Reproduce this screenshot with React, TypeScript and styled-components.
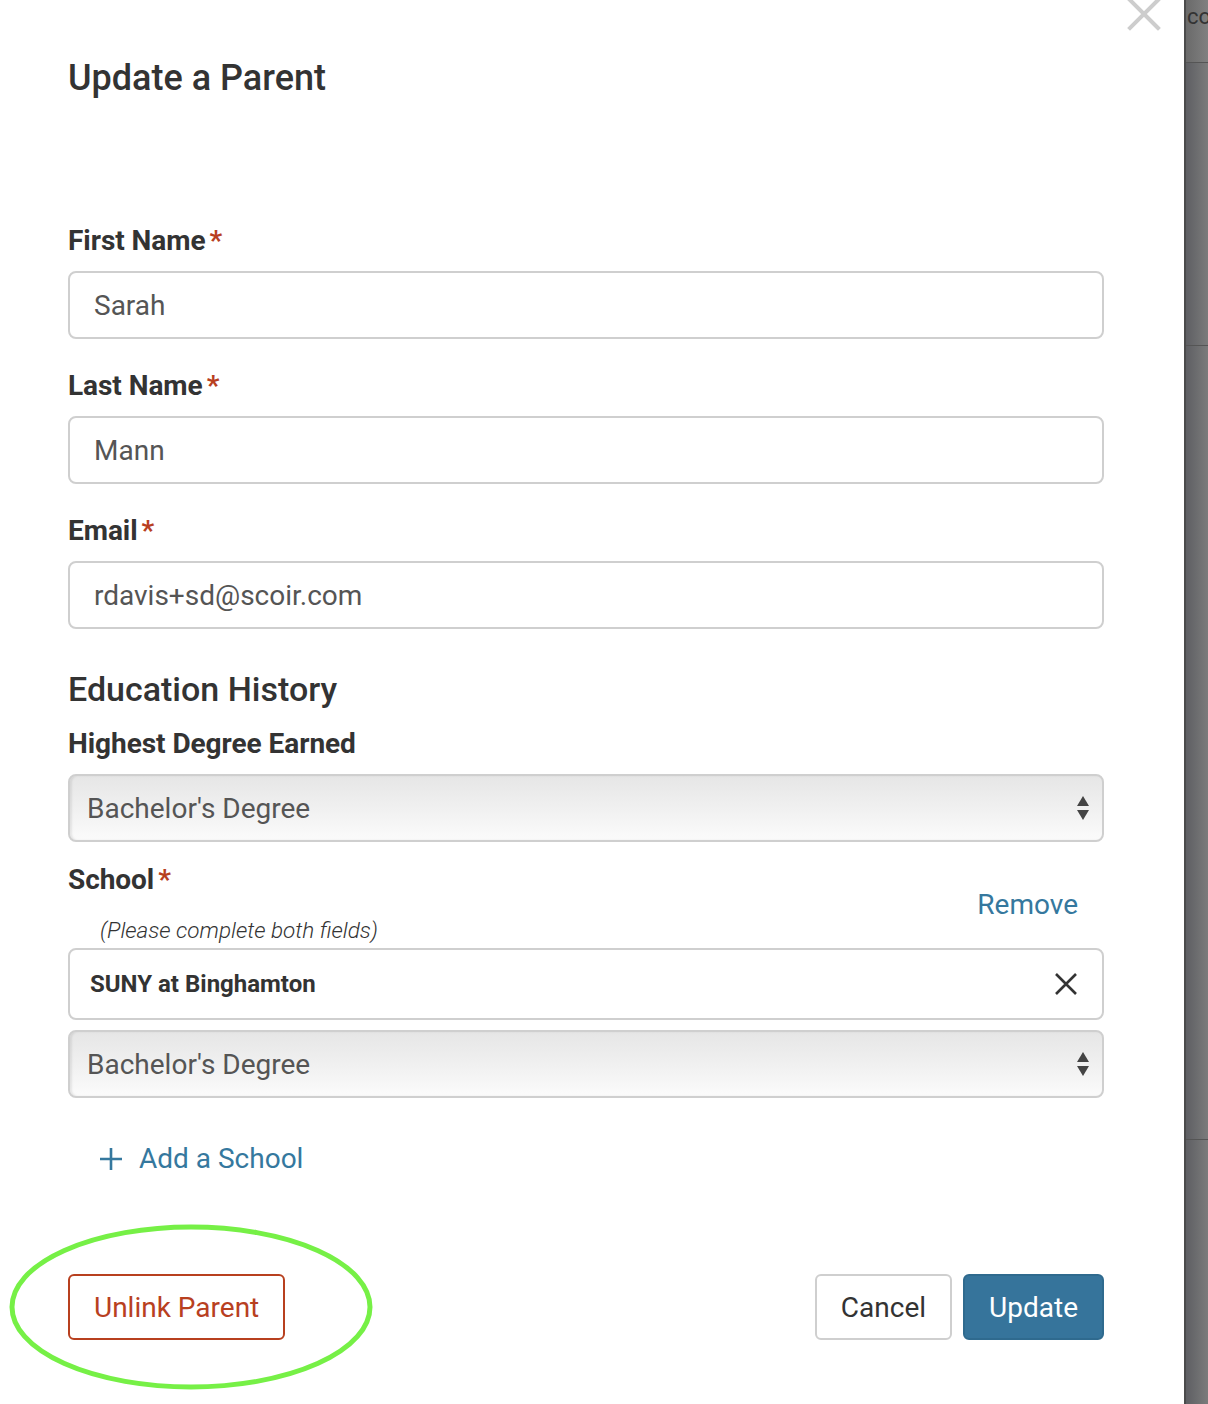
import React, { FC } from 'react';
import styled, { createGlobalStyle } from 'styled-components';

const GlobalStyle = createGlobalStyle`
  html, body {
    margin: 0;
    padding: 0;
    background: #fff;
  }
  body {
    font-family: Roboto, "Liberation Sans", Arial, sans-serif;
    color: #333;
  }
`;

const Page = styled.div`
  display: flex;
  width: 1208px;
  height: 1404px;
  overflow: hidden;
`;

const Modal = styled.div`
  position: relative;
  width: 1184px;
  flex: none;
  background: #fff;
  padding: 56px 80px 0 68px;
  box-sizing: border-box;
`;

const Backdrop = styled.div`
  flex: 1;
  display: flex;
  flex-direction: column;
  border-left: 2px solid #4b4b4b;
  background: linear-gradient(90deg, #5e5f63 0%, #7b7b7b 100%);
  overflow: hidden;
`;

const BackdropBand = styled.div<{ $h: number; $top?: boolean }>`
  height: ${(p) => p.$h}px;
  flex: none;
  border-bottom: 1px solid #555;
  background: ${(p) =>
    p.$top ? 'linear-gradient(90deg, #6a6a6a 0%, #808080 100%)' : 'transparent'};
  font-size: 22px;
  color: #333;
  white-space: nowrap;
  padding: 4px 0 0 1px;
  box-sizing: border-box;
`;

const CloseButton = styled.button`
  position: absolute;
  top: -6px;
  right: 20px;
  width: 40px;
  height: 40px;
  padding: 0;
  border: none;
  background: none;
  cursor: pointer;
`;

const Title = styled.h2`
  margin: 0 0 126px;
  font-size: 36px;
  line-height: 44px;
  font-weight: 500;
  color: #333;
`;

const Label = styled.div<{ $mt?: number }>`
  font-size: 28px;
  line-height: 30px;
  font-weight: 700;
  color: #333;
  letter-spacing: -0.05px;
  margin-top: ${(p) => p.$mt ?? 0}px;
`;

const Req = styled.span`
  color: #b8401f;
  margin-left: 4px;
`;

const Input = styled.div<{ $h?: number; $bold?: boolean }>`
  display: flex;
  align-items: center;
  justify-content: space-between;
  height: ${(p) => p.$h ?? 68}px;
  border: 2px solid #cfcfcf;
  border-radius: 8px;
  box-sizing: border-box;
  padding: 0 24px 0 ${(p) => (p.$bold ? 20 : 24)}px;
  font-size: ${(p) => (p.$bold ? 24 : 28)}px;
  font-weight: ${(p) => (p.$bold ? 700 : 400)};
  color: ${(p) => (p.$bold ? '#333' : '#555')};
  margin-top: 15px;
`;

const Select = styled.div<{ $mt?: number }>`
  display: flex;
  align-items: center;
  justify-content: space-between;
  height: 68px;
  border: 2px solid #cfcfcf;
  border-radius: 8px;
  box-sizing: border-box;
  padding: 0 12px 0 17px;
  font-size: 28px;
  color: #555;
  background: linear-gradient(180deg, #e6e6e6 0%, #f0f0f0 50%, #fbfbfb 100%);
  box-shadow: inset 2px 0 2px rgba(0, 0, 0, 0.08);
  margin-top: ${(p) => p.$mt ?? 15}px;
`;

const SectionTitle = styled.h3`
  margin: 40px 0 0;
  font-size: 34px;
  line-height: 40px;
  font-weight: 500;
  color: #333;
`;

const SchoolHead = styled.div`
  display: flex;
  justify-content: space-between;
  align-items: flex-end;
  margin-top: 23px;
`;

const Hint = styled.div`
  font-size: 22.5px;
  line-height: 26px;
  font-style: italic;
  font-weight: 300;
  color: #333;
  margin: 22px 0 0 32px;
`;

const LinkButton = styled.button<{ $size?: number }>`
  border: none;
  background: none;
  padding: 0;
  font-family: inherit;
  font-size: ${(p) => p.$size ?? 28}px;
  color: #35789e;
  cursor: pointer;
  display: flex;
  align-items: center;
  gap: 16px;
`;

const RemoveLink = styled(LinkButton)`
  margin: 0 26px 22px 0;
`;

const AddRow = styled.div`
  margin: 44px 0 0 31px;
`;

const Footer = styled.div`
  display: flex;
  align-items: center;
  justify-content: space-between;
  margin-top: 99px;
`;

const ButtonGroup = styled.div`
  display: flex;
  gap: 11px;
`;

const Button = styled.button<{ $variant: 'danger' | 'default' | 'primary' }>`
  height: 66px;
  border-radius: 6px;
  font-family: inherit;
  font-size: 28px;
  padding: 0 24px;
  box-sizing: border-box;
  cursor: pointer;
  border: 2px solid
    ${(p) => (p.$variant === 'danger' ? '#b8401f' : p.$variant === 'primary' ? '#2f6a8e' : '#cfcfcf')};
  background: ${(p) => (p.$variant === 'primary' ? '#36749b' : '#fff')};
  color: ${(p) => (p.$variant === 'danger' ? '#b8401f' : p.$variant === 'primary' ? '#fff' : '#333')};
`;

const UnlinkWrap = styled.div`
  position: relative;
`;

const Highlight = styled.svg`
  position: absolute;
  left: -60px;
  top: -52px;
  pointer-events: none;
`;

const SelectArrows: FC = () => (
  <svg width="14" height="26" viewBox="0 0 14 26">
    <path d="M7 1 L13 11 H1 Z" fill="#444" />
    <path d="M7 25 L13 15 H1 Z" fill="#444" />
  </svg>
);

const App: FC = () => (
  <>
    <GlobalStyle />
    <Page>
      <Modal>
        <CloseButton aria-label="Close">
          <svg width="40" height="40" viewBox="0 0 40 40">
            <path d="M6 6 L34 34 M34 6 L6 34" stroke="#cdcdcd" strokeWidth="4" strokeLinecap="square" />
          </svg>
        </CloseButton>

        <Title>Update a Parent</Title>

        <Label>
          First Name<Req>*</Req>
        </Label>
        <Input>Sarah</Input>

        <Label $mt={32}>
          Last Name<Req>*</Req>
        </Label>
        <Input>Mann</Input>

        <Label $mt={32}>
          Email<Req>*</Req>
        </Label>
        <Input>rdavis+sd@scoir.com</Input>

        <SectionTitle>Education History</SectionTitle>
        <Label $mt={20}>Highest Degree Earned</Label>
        <Select>
          Bachelor's Degree
          <SelectArrows />
        </Select>

        <SchoolHead>
          <div>
            <Label>
              School<Req>*</Req>
            </Label>
            <Hint>(Please complete both fields)</Hint>
          </div>
          <RemoveLink>Remove</RemoveLink>
        </SchoolHead>
        <Input $h={72} $bold style={{ marginTop: 5 }}>
          SUNY at Binghamton
          <svg width="24" height="24" viewBox="0 0 24 24">
            <path d="M2 2 L22 22 M22 2 L2 22" stroke="#333" strokeWidth="2.6" />
          </svg>
        </Input>
        <Select $mt={10}>
          Bachelor's Degree
          <SelectArrows />
        </Select>

        <AddRow>
          <LinkButton>
            <svg width="24" height="24" viewBox="0 0 24 24">
              <path d="M12 1 V23 M1 12 H23" stroke="#35789e" strokeWidth="2.6" />
            </svg>
            Add a School
          </LinkButton>
        </AddRow>

        <Footer>
          <UnlinkWrap>
            <Highlight width="366" height="170" viewBox="0 0 366 170">
              <ellipse cx="183" cy="85" rx="179" ry="80" fill="none" stroke="#76f046" strokeWidth="5" />
            </Highlight>
            <Button $variant="danger">Unlink Parent</Button>
          </UnlinkWrap>
          <ButtonGroup>
            <Button $variant="default">Cancel</Button>
            <Button $variant="primary">Update</Button>
          </ButtonGroup>
        </Footer>
      </Modal>
      <Backdrop>
        <BackdropBand $h={63} $top>
          co
        </BackdropBand>
        <BackdropBand $h={283} />
        <BackdropBand $h={794} />
      </Backdrop>
    </Page>
  </>
);

export default App;
